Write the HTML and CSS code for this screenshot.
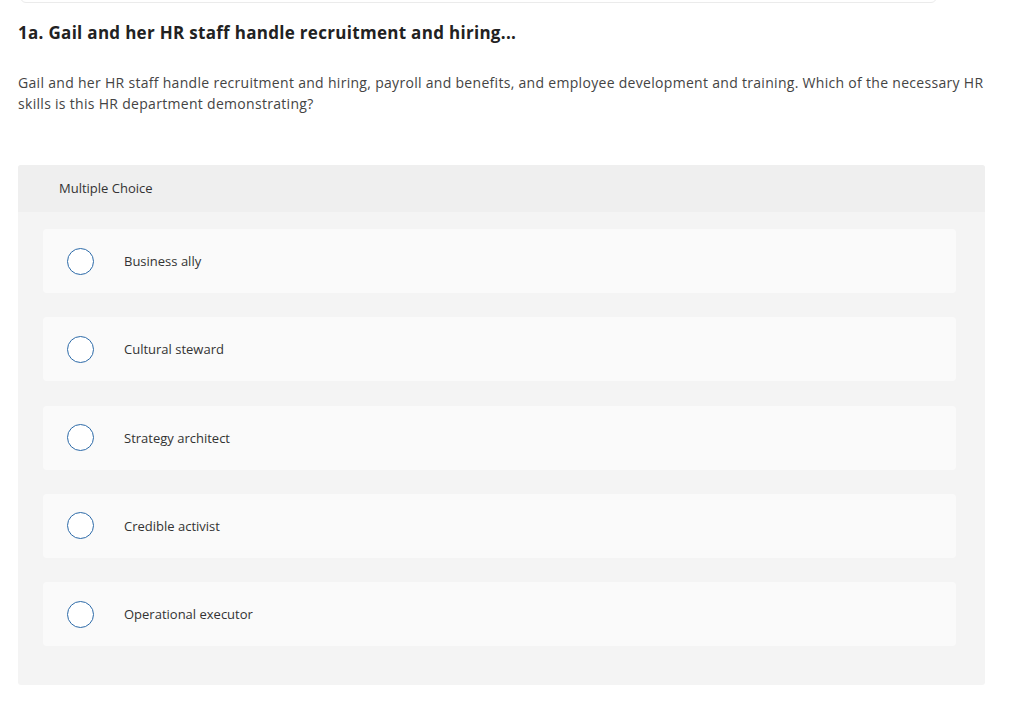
FILE: index.html
```html
<!DOCTYPE html>
<html lang="en">
<head>
  <meta charset="UTF-8" />
  <title>Question 1a</title>
  <link rel="stylesheet" href="styles.css">
</head>
<body>
  <div class="top-card"></div>

  <div class="question">
    <h1 class="question-title">1a. Gail and her HR staff handle recruitment and hiring...</h1>
    <p class="question-text">Gail and her HR staff handle recruitment and hiring, payroll and benefits, and employee development and training. Which of the necessary HR skills is this HR department demonstrating?</p>

    <div class="choice-panel">
      <div class="choice-head">Multiple Choice</div>
      <div class="choice-list">
        <label class="choice"><span class="radio"></span><span class="choice-label">Business ally</span></label>
        <label class="choice"><span class="radio"></span><span class="choice-label">Cultural steward</span></label>
        <label class="choice"><span class="radio"></span><span class="choice-label">Strategy architect</span></label>
        <label class="choice"><span class="radio"></span><span class="choice-label">Credible activist</span></label>
        <label class="choice"><span class="radio"></span><span class="choice-label">Operational executor</span></label>
      </div>
    </div>
  </div>
</body>
</html>
```

FILE: styles.css
```css
* {
  margin: 0;
  padding: 0;
  box-sizing: border-box;
}

body {
  font-family: 'Open Sans', Lato, sans-serif;
  color: #333;
  background: #fff;
}

.top-card {
  margin: -20px 87px 0 20px;
  height: 23px;
  border: 1px solid #ebebeb;
  border-radius: 0 0 6px 6px;
}

.question {
  width: 967px;
  margin-left: 18px;
}

.question-title {
  margin-top: 19px;
  font-size: 17px;
  line-height: 22px;
  font-weight: 700;
  letter-spacing: 0.3px;
  color: #222;
}

.question-text {
  margin-top: 28px;
  font-size: 14px;
  line-height: 21px;
  letter-spacing: 0.3px;
  color: #444;
}

.choice-panel {
  margin-top: 51px;
  background: #f4f4f4;
  border-radius: 3px;
  overflow: hidden;
}

.choice-head {
  background: #efefef;
  height: 47px;
  padding: 14px 0 0 41px;
  font-size: 13px;
  color: #333;
}

.choice-list {
  display: flex;
  flex-direction: column;
  gap: 24.25px;
  padding: 17px 29px 39px 25px;
}

.choice {
  display: flex;
  align-items: center;
  height: 64px;
  background: #fafafa;
  border-radius: 4px;
  padding-left: 24px;
  cursor: pointer;
}

.radio {
  width: 27px;
  height: 27px;
  border: 1px solid #2c6aa8;
  border-radius: 50%;
  background: #fff;
  flex-shrink: 0;
}

.choice-label {
  margin-left: 30px;
  font-size: 13px;
  color: #333;
}
```
